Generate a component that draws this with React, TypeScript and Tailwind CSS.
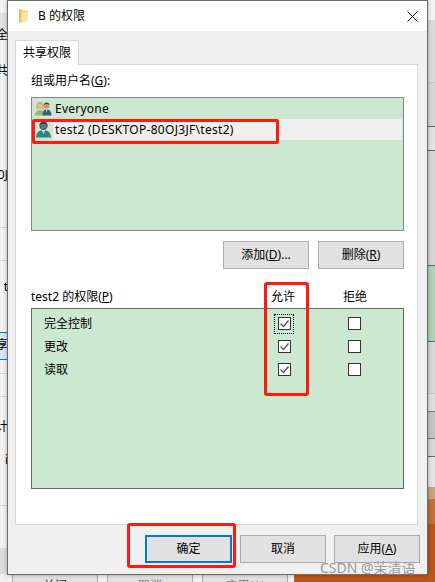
import type { ReactNode } from 'react';

const font = { fontFamily: '"Noto Sans", "Noto Sans CJK SC", sans-serif' };

function FolderIcon() {
  return (
    <svg width="10" height="14" viewBox="0 0 10 14" className="shrink-0">
      <path d="M0 0.500h4l1 1h4v10L3 13.500H0z" fill="#f5d47a" />
      <path d="M3 3.500l6-1v9l-6 2z" fill="#fbe7a8" />
      <path d="M0 0.500h2v13H0z" fill="#e8bf5c" />
    </svg>
  );
}

function UsersIcon() {
  return (
    <svg width="17" height="15" viewBox="0 0 17 15" className="shrink-0">
      <path d="M1.500 8c-1-4 1-7 3.500-7s4 3 3.500 7z" fill="#c9a85f" />
      <circle cx="5" cy="5.500" r="2.800" fill="#e2bd92" />
      <path d="M0 14.500c0-3.500 2-5.500 5-5.500s4.500 2 4.500 5.500z" fill="#9db87c" />
      <circle cx="11.500" cy="4.500" r="3" fill="#c8976f" />
      <path d="M8.500 4c0-3 6-3.500 6 0-2-1.500-4-1-6 0z" fill="#3d4d5e" />
      <path d="M7.500 14.500c0-4 1.500-6.500 4-6.500s5 2.500 5 6.500z" fill="#3c5f88" />
      <path d="M10.500 8h2l-1 3z" fill="#e6eef4" />
    </svg>
  );
}

function UserIcon() {
  return (
    <svg width="15" height="17" viewBox="0 0 15 17" className="shrink-0">
      <circle cx="7.500" cy="4.800" r="4.200" fill="#40596a" />
      <path d="M4.500 3.500c1-2 5-2 6 0l-.5 3-1.500 1.500h-2L5 6.500z" fill="#5e7784" />
      <path d="M3.500 3.500c1-3.500 7-3.500 8 0-2.500-1-5.500-1-8 0z" fill="#2c4250" />
      <path d="M0 16.500c0-4.500 3-7.500 7.500-7.500s7.500 3 7.500 7.500z" fill="#2b8583" />
      <path d="M5.500 9h4l-2 4z" fill="#b5dedb" />
    </svg>
  );
}

function Check({ checked, focused }: { checked: boolean; focused?: boolean }) {
  return (
    <span
      className={
        'flex h-[20px] w-[20px] shrink-0 items-center justify-center border border-dotted ' +
        (focused ? 'border-black' : 'border-transparent')
      }
    >
      <span className="flex h-[13px] w-[13px] items-center justify-center border border-[#333] bg-white">
        {checked && (
          <svg width="11" height="11" viewBox="0 0 11 11">
            <path d="M1.500 5.500L4.500 8.500L9.500 2.500" fill="none" stroke="#555" strokeWidth="1.300" />
          </svg>
        )}
      </span>
    </span>
  );
}

function Btn({ children, primary }: { children: ReactNode; primary?: boolean }) {
  return (
    <button
      type="button"
      className={
        'flex h-[28px] items-center justify-center bg-[#e1e1e1] text-[12px] text-black ' +
        (primary ? 'w-[87px] border-2 border-[#0078d7]' : 'w-[86px] border border-[#adadad]')
      }
    >
      {children}
    </button>
  );
}

const perms = [
  { name: '完全控制', focused: true },
  { name: '更改' },
  { name: '读取' },
];

// slices of the windows behind the dialog, top to bottom
const rightStrip = [
  'h-[20px] bg-[#f4f4f4]',
  'h-[63px] border-b border-[#c8c8c8] bg-[#dadada]',
  'h-[44px] border-b border-[#666] bg-[#d6d6d6]',
  'h-[24px] border-b border-[#666] bg-[#e2e2e2]',
  'h-[115px] border-b border-[#666] bg-[#d6d6d6]',
  'h-[76px] border-b border-[#666] bg-[#b3cfb7]',
  'h-[52px] border-b border-[#c8c8c8] bg-[#d8d8d8]',
  'h-[18px] border-b border-[#777] bg-[#dedede]',
  'h-[27px] border-b border-[#777] bg-[#c4c4c4]',
  'h-[18px] border-b border-[#666] bg-[#d8d8d8]',
  'h-[30px] bg-[#e4e4e4]',
];

const leftFragments = [
  { text: '全', cls: 'top-[26px]' },
  { text: '共', cls: 'top-[62px]' },
  { text: '0J', cls: 'top-[166px]' },
  { text: 't', cls: 'top-[278px] text-[#b5651d]' },
  { text: '享', cls: 'top-[336px]' },
  { text: '计', cls: 'top-[418px]' },
  { text: 'i', cls: 'top-[451px] text-[#b5651d]' },
];

export default function App() {
  return (
    <div className="relative h-[582px] w-[435px] overflow-hidden bg-[#f3f3f3]" style={font}>
      {/* desktop behind the dialog */}
      <div className="absolute left-0 top-[13px] h-[24px] w-[8px] border-b border-[#bbb] bg-[#e2e2e2]" />
      <div className="absolute left-0 top-[227px] h-[34px] w-[8px] border-y border-[#d4d4d4]" />
      <div className="absolute left-0 top-[332px] h-[28px] w-[8px] border-y border-[#0078d7] bg-[#d8e6f2]" />
      <div className="absolute left-0 top-[373px] h-[24px] w-[8px] border-y border-[#d4d4d4]" />
      <div className="absolute left-0 top-[505px] h-[43px] w-[8px] border-t border-[#d4d4d4]" />
      <div className="absolute left-0 top-[548px] h-[34px] w-[8px] bg-[#dcdcdc]" />
      {leftFragments.map((f) => (
        <span key={f.text} className={'absolute left-[-6px] w-[14px] overflow-hidden text-right text-[12px] text-black ' + f.cls}>
          {f.text}
        </span>
      ))}

      <div className="absolute right-0 top-0 flex w-[8px] flex-col">
        {rightStrip.map((cls) => (
          <div key={cls} className={'shrink-0 ' + cls} />
        ))}
      </div>

      {/* wallpaper showing at the bottom right */}
      <div className="absolute right-0 top-[487px] h-[12px] w-[8px] bg-[#c9a27e]" />
      <div className="absolute right-0 top-[499px] h-[25px] w-[8px] bg-[#c0703a]" />
      <div className="absolute right-0 top-[524px] h-[58px] w-[8px] bg-[#b9561c]" />
      <div className="absolute bottom-0 left-[294px] h-[8px] w-[141px] bg-[#b9561c]" />

      {/* strip of buttons of the window behind, showing below the dialog */}
      <div className="absolute bottom-0 left-0 flex h-[8px] w-[294px] overflow-hidden bg-[#f0f0f0]">
        <div className="ml-[12px] flex h-[16px] w-[86px] shrink-0 justify-center border border-[#aaa] bg-[#e1e1e1] pt-[2px] text-[12px] text-[#333]">关闭</div>
        <div className="ml-[9px] flex h-[16px] w-[86px] shrink-0 justify-center border border-[#aaa] bg-[#e1e1e1] pt-[2px] text-[12px] text-[#888]">取消</div>
        <div className="ml-[9px] flex h-[16px] w-[86px] shrink-0 justify-center border border-[#aaa] bg-[#e1e1e1] pt-[2px] text-[12px] text-[#888]">应用(A)</div>
      </div>

      <div className="absolute left-[7px] top-0 flex h-[575px] w-[421px] flex-col border border-[#6c6c6c] bg-[#f0f0f0] shadow-[0_0_4px_rgba(0,0,0,0.3)]">
        <div className="flex h-[30px] shrink-0 items-center bg-white pl-[11px] pr-[9px]">
          <FolderIcon />
          <span className="ml-[9px] text-[12px] text-black">B 的权限</span>
          <svg width="11" height="11" viewBox="0 0 11 11" className="ml-auto">
            <path d="M0.500 0.500L10.500 10.500M10.500 0.500L0.500 10.500" stroke="#111" />
          </svg>
        </div>

        <div className="flex min-h-0 flex-1 flex-col px-[7px] pt-[9px]">
          <div className="z-10 -mb-px flex h-[25px] w-[64px] items-center justify-center border border-b-0 border-[#d9d9d9] bg-white text-[12px] text-black">
            共享权限
          </div>
          <div className="flex h-[461px] w-[403px] flex-col border border-[#d9d9d9] bg-white px-[15px]">
            <div className="flex h-[31px] shrink-0 items-center text-[12px] text-black">
              组或用户名(<span className="underline">G</span>):
            </div>
            <div className="mt-[1px] h-[134px] w-[373px] shrink-0 border border-[#82878c] bg-[#cde8d0]">
              <div className="flex h-[21px] items-center text-[12px] text-black">
                <span className="flex w-[21px] justify-center pl-[2px]">
                  <UsersIcon />
                </span>
                <span className="pl-[2px] tracking-[0.25px]">Everyone</span>
              </div>
              <div className="mr-px flex h-[21px] items-center text-[12px] text-black">
                <span className="flex w-[21px] justify-center pl-[2px]">
                  <UserIcon />
                </span>
                <span className="flex h-full flex-1 items-center bg-[#efefef] pl-[2px] tracking-[0.3px]">test2 (DESKTOP-80OJ3JF\test2)</span>
              </div>
            </div>

            <div className="mt-[10px] flex w-[373px] shrink-0 justify-end gap-[9px]">
              <Btn>
                添加(<span className="underline">D</span>)...
              </Btn>
              <Btn>
                删除(<span className="underline">R</span>)
              </Btn>
            </div>

            <div className="mt-[17px] flex h-[21px] w-[373px] shrink-0 items-center text-[12px] text-black">
              <span className="w-[217px]">
                test2 的权限(<span className="underline">P</span>)
              </span>
              <span className="w-[70px] text-center">允许</span>
              <span className="ml-[2px] w-[70px] text-center">拒绝</span>
            </div>

            <div className="mt-[1px] flex h-[181px] w-[373px] shrink-0 flex-col border border-[#666] bg-[#cde8d0] pt-[3px] text-[12px] text-black">
              {perms.map((p) => (
                <div key={p.name} className="flex h-[23px] items-center">
                  <span className="w-[242px] pl-[12px]">{p.name}</span>
                  <Check checked focused={p.focused} />
                  <span className="ml-[50px]">
                    <Check checked={false} />
                  </span>
                </div>
              ))}
            </div>
          </div>

          <div className="mt-[10px] flex w-[405px] justify-end gap-[8px]">
            <Btn primary>确定</Btn>
            <Btn>取消</Btn>
            <Btn>
              应用(<span className="underline">A</span>)
            </Btn>
          </div>
        </div>
      </div>

      {/* red annotation boxes */}
      <div className="absolute left-[32px] top-[119px] h-[25px] w-[247px] rounded-[2px] border-[3px] border-[#ff1a0d]" />
      <div className="absolute left-[264px] top-[282px] h-[114px] w-[45px] rounded-[3px] border-[3px] border-[#ff1a0d]" />
      <div className="absolute left-[127px] top-[523px] h-[45px] w-[109px] rounded-[3px] border-[3px] border-[#ff1a0d]" />

      {/* watermark */}
      <div className="absolute left-[320px] top-[557px] text-[14px] text-[#9a9a9a]">CSDN @茉清语</div>
    </div>
  );
}
